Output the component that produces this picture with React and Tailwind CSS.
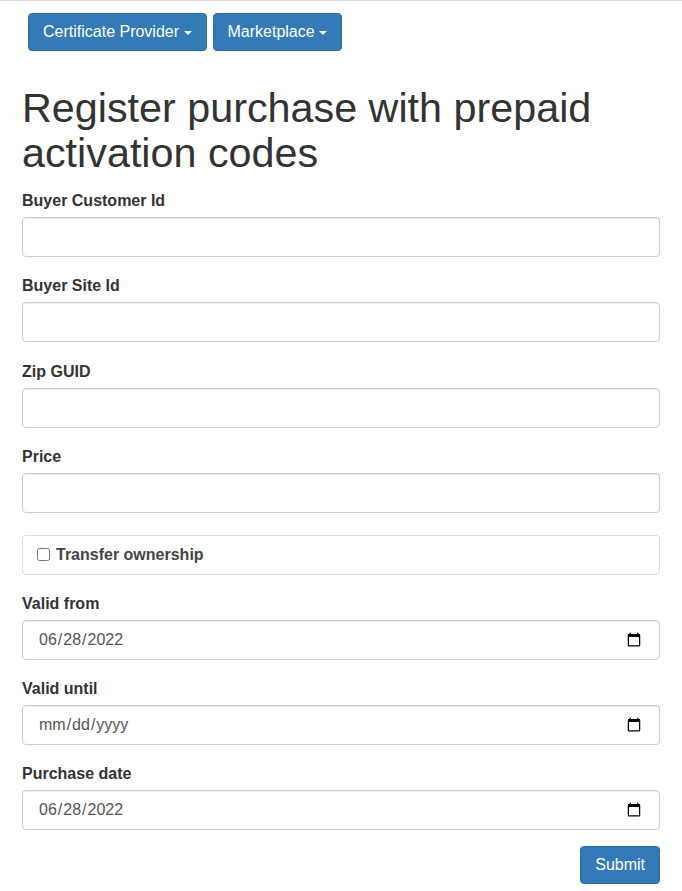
// App.jsx — Register purchase with prepaid activation codes

function Caret() {
  return <span className="inline-block align-middle w-0 h-0 border-x-[4px] border-x-transparent border-t-[4px] border-t-white" />
}

function Field({ label, type = 'text', defaultValue, gap = 'mb-[18.33px]' }) {
  return (
    <div className={gap}>
      <label className="block text-[16px] leading-[22px] font-bold text-[#333] mb-[5px]">{label}</label>
      <input
        type={type}
        defaultValue={defaultValue}
        className="block w-full h-[40px] px-[15px] text-[16px] text-[#555] bg-white border border-[#ccc] rounded-[4px] shadow-[inset_0_1px_1px_rgba(0,0,0,0.075)] outline-none"
      />
    </div>
  )
}

export default function App() {
  return (
    <div className="min-h-screen bg-white border-t border-[#ddd] text-[#333]" style={{ fontFamily: '"Liberation Sans", Arial, sans-serif' }}>

      {/* ── Menu ── */}
      <nav className="pt-[12px] pl-[28px] flex gap-[6px]">
        <button className="h-[38px] px-[14px] text-[16px] text-white bg-[#337ab7] border border-[#2e6da4] rounded-[4px]">
          Certificate Provider <Caret />
        </button>
        <button className="h-[38px] px-[14px] text-[16px] text-white bg-[#337ab7] border border-[#2e6da4] rounded-[4px]">
          Marketplace <Caret />
        </button>
      </nav>

      <main className="px-[22px]">
        <h1 className="mt-[35px] mb-[14px] text-[41.3px] leading-[45px] font-normal text-[#333]">
          Register purchase with prepaid activation codes
        </h1>

        <form>
          <Field label="Buyer Customer Id" />
          <Field label="Buyer Site Id" />
          <Field label="Zip GUID" />
          <Field label="Price" />

          <div className="mt-[22px] mb-[18px] h-[40px] flex items-center px-[14px] border border-[#ddd] rounded-[4px]">
            <label className="flex items-center gap-[6px] text-[16px] font-bold text-[#444]">
              <input type="checkbox" className="w-[13px] h-[13px]" />
              Transfer ownership
            </label>
          </div>

          <Field label="Valid from" type="date" defaultValue="2022-06-28" gap="mb-[18px]" />
          <Field label="Valid until" type="date" gap="mb-[18px]" />
          <Field label="Purchase date" type="date" defaultValue="2022-06-28" gap="mb-[16px]" />

          <div className="flex justify-end">
            <button type="button" className="h-[38px] px-[14px] text-[16px] text-white bg-[#337ab7] border border-[#2e6da4] rounded-[4px]">
              Submit
            </button>
          </div>
        </form>
      </main>

    </div>
  )
}
